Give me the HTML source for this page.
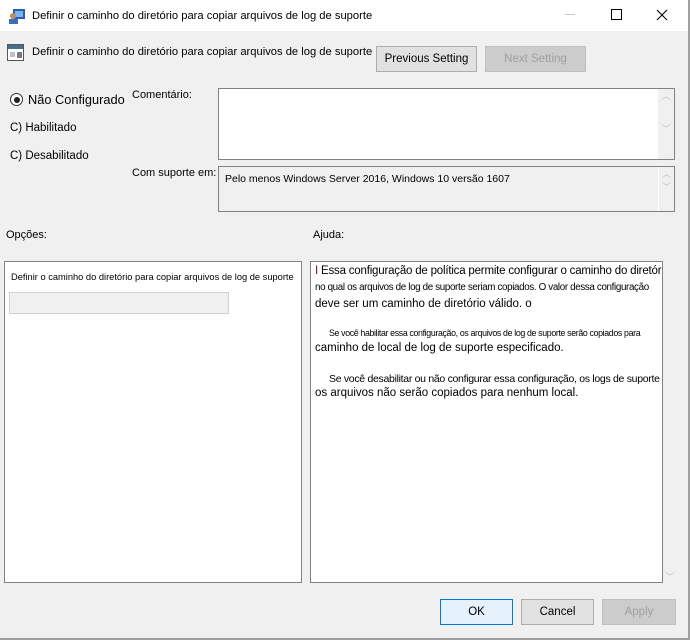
<!DOCTYPE html>
<html><head><style>
*{box-sizing:border-box;margin:0;padding:0}
body{width:690px;height:640px;background:#f0f0f0;font-family:"Liberation Sans",sans-serif;font-size:11px;color:#000;position:relative;overflow:hidden}
.a{position:absolute;white-space:nowrap}
.btn{position:absolute;border:1px solid #adadad;background:#e1e1e1;text-align:center;line-height:24px;font-size:11.5px}
.dis{background:#cccccc;border-color:#bfbfbf;color:#a0a0a0}
.box{position:absolute;border:1px solid #828282;background:#fff}
.sb{position:absolute;background:#f0f0f0;color:#c0c0c0;font-size:9px;text-align:center}
</style></head><body>
<div class="a" style="left:0;top:0;width:689px;height:31px;background:#fff"></div>
<div class="a" style="left:688px;top:0;width:2px;height:640px;background:#a0a0a0"></div>
<div class="a" style="left:0;top:638px;width:690px;height:2px;background:#a0a0a0"></div>
<svg class="a" style="left:8px;top:7px" width="18" height="18"><rect x="5" y="2" width="12" height="10" fill="#2a5fb0"/><rect x="7" y="4" width="8" height="6" fill="#7ab3f0"/><circle cx="5" cy="9" r="3" fill="#c58a5a"/><rect x="1" y="12" width="9" height="5" fill="#3b6fb8"/></svg>
<div class="a" style="left:32px;top:10px;font-size:11.2px">Definir o caminho do diretório para copiar arquivos de log de suporte</div>
<div class="a" style="left:565px;top:14px;width:10px;height:1px;background:#c8c8c8"></div>
<div class="a" style="left:611px;top:9px;width:11px;height:11px;border:1px solid #000"></div>
<svg class="a" style="left:656px;top:9px" width="12" height="12"><path d="M1 1L11 11M11 1L1 11" stroke="#000" stroke-width="1.1"/></svg>
<svg class="a" style="left:7px;top:44px" width="18" height="18"><rect x="0.5" y="0.5" width="16" height="16" fill="#fff" stroke="#555"/><rect x="1" y="1" width="15" height="4" fill="#4a6d8c"/><rect x="3" y="8" width="5" height="5" fill="#c0c0c0"/><rect x="10" y="8" width="5" height="6" fill="#7a7a7a"/></svg>
<div class="a" style="left:32px;top:46px;font-size:11.2px">Definir o caminho do diretório para copiar arquivos de log de suporte</div>
<div class="btn" style="left:376px;top:46px;width:101px;height:26px">Previous Setting</div>
<div class="btn dis" style="left:485px;top:46px;width:101px;height:26px">Next Setting</div>
<div class="a" style="left:10px;top:93px;width:13px;height:13px;border:1px solid #333;border-radius:50%;background:#fff"></div>
<div class="a" style="left:13.5px;top:96.5px;width:6px;height:6px;border-radius:50%;background:#222"></div>
<div class="a" style="left:28px;top:92px;font-size:12.8px">Não Configurado</div>
<div class="a" style="left:10px;top:122px;font-size:11.5px">C) Habilitado</div>
<div class="a" style="left:10px;top:150px;font-size:11.5px">C) Desabilitado</div>
<div class="a" style="left:132px;top:89px">Comentário:</div>
<div class="box" style="left:218px;top:88px;width:457px;height:72px"><div class="sb" style="right:0;top:0;width:16px;height:70px">︿<br><br><br>﹀</div></div>
<div class="a" style="left:132px;top:167px">Com suporte em:</div>
<div class="box" style="left:218px;top:166px;width:457px;height:46px;background:#f0f0f0"><div class="a" style="left:6px;top:6px;font-size:10.5px">Pelo menos Windows Server 2016, Windows 10 versão 1607</div><div class="sb" style="right:0;top:0;width:16px;height:44px;border-left:1px solid #fff">︿<br>﹀</div></div>
<div class="a" style="left:6px;top:229px">Opções:</div>
<div class="a" style="left:313px;top:229px">Ajuda:</div>
<div class="box" style="left:4px;top:261px;width:298px;height:322px"><div class="a" style="left:6px;top:10px;font-size:9.3px">Definir o caminho do diretório para copiar arquivos de log de suporte</div><div class="a" style="left:4px;top:30px;width:220px;height:22px;border:1px solid #d0d0d0;background:#f0f0f0"></div></div>
<div class="box" style="left:310px;top:261px;width:353px;height:322px;overflow:hidden;font-size:11.5px;line-height:18px">
<div class="a" style="left:4px;top:0px;letter-spacing:-0.2px"><span style="color:#800040">I</span> Essa configuração de política permite configurar o caminho do diretório</div>
<div class="a" style="left:4px;top:17px;font-size:9.8px;letter-spacing:-0.35px">no qual os arquivos de log de suporte seriam copiados. O valor dessa configuração</div>
<div class="a" style="left:4px;top:33px">deve ser um caminho de diretório válido. o</div>
<div class="a" style="left:18px;top:62px;font-size:8.8px;letter-spacing:-0.35px">Se você habilitar essa configuração, os arquivos de log de suporte serão copiados para</div>
<div class="a" style="left:4px;top:77px">caminho de local de log de suporte especificado.</div>
<div class="a" style="left:18px;top:108px;font-size:10.5px;letter-spacing:-0.3px">Se você desabilitar ou não configurar essa configuração, os logs de suporte</div>
<div class="a" style="left:4px;top:122px">os arquivos não serão copiados para nenhum local.</div>
</div>
<div class="sb" style="left:663px;top:261px;width:14px;height:322px"><div style="position:absolute;bottom:0;width:14px">﹀</div></div>
<div class="btn" style="left:440px;top:599px;width:73px;height:26px;background:#e5f1fb;border-color:#0078d7">OK</div>
<div class="btn" style="left:521px;top:599px;width:73px;height:26px">Cancel</div>
<div class="btn dis" style="left:602px;top:599px;width:74px;height:26px">Apply</div>
</body></html>
